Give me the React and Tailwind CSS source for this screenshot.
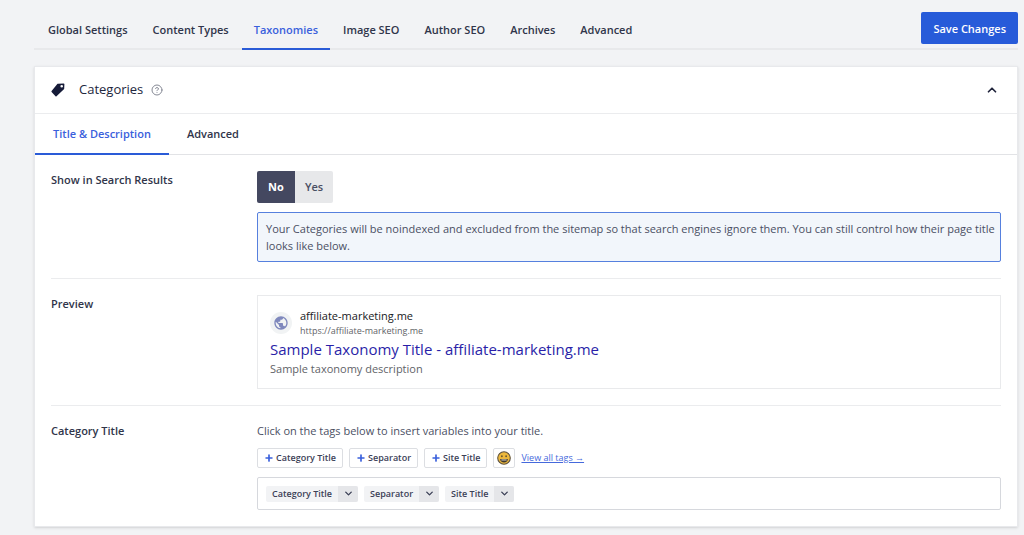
import React, { useState } from "react";
import { ChevronDown, ChevronUp, CircleHelp, Plus } from "lucide-react";

const NAV_TABS = [
  "Global Settings",
  "Content Types",
  "Taxonomies",
  "Image SEO",
  "Author SEO",
  "Archives",
  "Advanced",
];

const PANEL_TABS = ["Title & Description", "Advanced"];

const VARIABLES = ["Category Title", "Separator", "Site Title"];

const TagIcon = () => (
  <svg viewBox="0 0 14 14" className="size-3.5 text-[#161b38]" fill="currentColor" aria-hidden="true">
    <path
      fillRule="evenodd"
      d="M7 .8 12.6.4c.5 0 .8.3.8.7l-.2 4.500c0 .3-.1.5-.3.7L5.500 13.200c-.3.3-.7.3-1 0L.6 8.900c-.3-.3-.3-.7 0-1L6.300 1.100C6.500.9 6.700.8 7 .8ZM10.700 1.900a1.300 1.300 0 1 0 0 2.600 1.300 1.300 0 0 0 0-2.600Z"
    />
  </svg>
);

const GlobeIcon = () => (
  <svg viewBox="0 0 24 24" className="size-4 text-[#7f88bd]" fill="currentColor" aria-hidden="true">
    <path d="M12 2C6.48 2 2 6.48 2 12s4.48 10 10 10 10-4.48 10-10S17.52 2 12 2zm-1 17.93c-3.95-.49-7-3.85-7-7.93 0-.62.08-1.21.21-1.79L9 15v1c0 1.1.9 2 2 2v1.93zm6.9-2.54c-.26-.81-1-1.39-1.9-1.39h-1v-3c0-.55-.45-1-1-1H8v-2h2c.55 0 1-.45 1-1V7h2c1.1 0 2-.9 2-2v-.41c2.93 1.19 5 4.06 5 7.41 0 2.08-.8 3.97-2.1 5.39z" />
  </svg>
);

const SmileyIcon = () => (
  <svg viewBox="0 0 16 16" className="size-3.5 shrink-0" aria-hidden="true">
    <circle cx="8" cy="8" r="7.2" fill="#edb83c" stroke="#5b5040" strokeWidth="1.2" />
    <ellipse cx="5.6" cy="6" rx="0.8" ry="1.2" fill="#40392f" />
    <ellipse cx="10.4" cy="6" rx="0.8" ry="1.2" fill="#40392f" />
    <path d="M3.6 9h8.8c0 2.5-1.9 4-4.4 4s-4.400-1.500-4.400-4Z" fill="#40392f" />
    <path d="M5 9.700h6v1.100H5Z" fill="#e9e2d4" />
  </svg>
);

const SettingRow = ({ label, htmlFor, labelId, children }) => {
  const labelClass = "w-[190px] shrink-0 text-[11px] leading-[18px] font-semibold text-[#30354a]";

  return (
    <div className="flex gap-4 border-b border-[#ebecee] py-4 last:border-b-0">
      {htmlFor ? (
        <label htmlFor={htmlFor} className={labelClass}>{label}</label>
      ) : (
        <div id={labelId} className={labelClass}>{label}</div>
      )}
      <div className="min-w-0 flex-1">{children}</div>
    </div>
  );
};

const VariableChip = ({ name }) => (
  <span className="flex h-4 overflow-hidden rounded-xs bg-[#f2f3f5] text-[9px] font-semibold text-[#3c4157]">
    <span className="flex items-center px-1.5">{name}</span>
    <button type="button" aria-label={`${name} options`} className="flex w-5 items-center justify-center bg-[#e5e6e9]">
      <ChevronDown size={11} strokeWidth={3} />
    </button>
  </span>
);

export default function App() {
  const [activeTab, setActiveTab] = useState("Taxonomies");
  const [panelTab, setPanelTab] = useState("Title & Description");
  const [showInSearch, setShowInSearch] = useState("No");
  const [open, setOpen] = useState(true);

  return (
    <div className="min-h-screen bg-[#f2f3f5] pr-1.5 pb-2 pl-[34px] font-['Open_Sans',sans-serif] text-[#4a4f63]">
      {/* Top navigation */}
      <header className="flex items-end justify-between border-b-2 border-[#e8e9eb] pt-2.5">
        <nav className="-mb-0.5 flex gap-px pl-0.5">
          {NAV_TABS.map((tab) => (
            <button
              key={tab}
              type="button"
              onClick={() => setActiveTab(tab)}
              className={`h-10 border-b-2 px-3 pt-0.5 text-[11px] font-semibold ${
                activeTab === tab ? "border-[#2a5bd7] text-[#3a60dc]" : "border-transparent text-[#30354a]"
              }`}
            >
              {tab}
            </button>
          ))}
        </nav>
        <button type="button" className="mb-1 h-8 rounded-xs bg-[#275bd9] px-3 pt-0.5 text-[11px] font-semibold text-white">
          Save Changes
        </button>
      </header>

      <main className="mt-4 border border-[#e8e9ec] bg-white shadow-sm">
        <div className="flex h-[47px] items-center justify-between border-b border-[#ebecee] px-4">
          <div className="flex items-center">
            <TagIcon />
            <h2 className="ml-3.5 text-[13px] font-medium text-[#22263d]">Categories</h2>
            <CircleHelp size={12} className="ml-2 text-[#858995]" />
          </div>
          <button type="button" aria-label="Toggle panel" aria-expanded={open} onClick={() => setOpen(!open)} className="px-0.5 text-[#22263d]">
            {open ? <ChevronUp size={14} strokeWidth={3} /> : <ChevronDown size={14} strokeWidth={3} />}
          </button>
        </div>

        {open && (
          <>
            <div className="flex border-b border-[#e2e3e6]">
              {PANEL_TABS.map((tab) => (
                <button
                  key={tab}
                  type="button"
                  onClick={() => setPanelTab(tab)}
                  className={`-mb-px h-[41px] border-b-2 px-4.5 pt-0.5 text-[11px] font-semibold ${
                    panelTab === tab ? "border-[#2a5bd7] text-[#3a60dc]" : "border-transparent text-[#30354a]"
                  }`}
                >
                  {tab}
                </button>
              ))}
            </div>

            <div className="px-4">
              <SettingRow label="Show in Search Results" labelId="search-results-label">
                <div role="radiogroup" aria-labelledby="search-results-label" className="flex">
                  {["No", "Yes"].map((option) => (
                    <label
                      key={option}
                      className={`relative flex h-8 w-[38px] cursor-pointer items-center justify-center text-[11px] first:rounded-l-xs last:rounded-r-xs ${
                        showInSearch === option ? "bg-[#444860] font-bold text-white" : "bg-[#e7e8ea] font-semibold text-[#4a4f63]"
                      }`}
                    >
                      <input
                        type="radio"
                        name="show-in-search"
                        value={option}
                        checked={showInSearch === option}
                        onChange={() => setShowInSearch(option)}
                        className="sr-only"
                      />
                      {option}
                    </label>
                  ))}
                </div>
                <p className="mt-[9px] rounded-xs border border-[#5680de] bg-[#f2f6fb] py-[7px] pr-0.5 pl-2 text-[11px] leading-[17px]">
                  Your Categories will be noindexed and excluded from the sitemap so that search engines ignore them. You can
                  still control how their page title looks like below.
                </p>
              </SettingRow>

              <SettingRow label="Preview">
                <div className="border border-[#e9eaec] px-3 pt-3 pb-2.5">
                  <div className="flex items-center gap-2">
                    <span className="flex size-[22px] items-center justify-center rounded-full bg-[#f1f3f4]">
                      <GlobeIcon />
                    </span>
                    <div>
                      <div className="text-[11px] leading-4 text-[#202124]">affiliate-marketing.me</div>
                      <div className="text-[9px] leading-3.5 text-[#5f6368]">https://affiliate-marketing.me</div>
                    </div>
                  </div>
                  <a href="#preview" className="block text-[15px] leading-[22px] text-[#2a1fa8]">
                    Sample Taxonomy Title - affiliate-marketing.me
                  </a>
                  <p className="text-[11px] leading-[18px] text-[#5f6368]">Sample taxonomy description</p>
                </div>
              </SettingRow>

              <SettingRow label="Category Title" htmlFor="category-title">
                <p className="text-[11px] leading-[18px]">Click on the tags below to insert variables into your title.</p>
                <div className="mt-2 flex items-center gap-1.5">
                  {VARIABLES.map((name) => (
                    <button
                      key={name}
                      type="button"
                      className="flex h-5 items-center gap-0.5 rounded-xs border border-[#dcdee2] px-1.5 text-[9px] font-semibold text-[#3c4157]"
                    >
                      <Plus size={10} strokeWidth={4} className="text-[#3a60dc]" />
                      {name}
                    </button>
                  ))}
                  <button type="button" aria-label="Insert emoji" className="flex h-5 w-[22px] items-center justify-center rounded-xs border border-[#dcdee2]">
                    <SmileyIcon />
                  </button>
                  <a href="#tags" className="text-[9px] text-[#4569dc] underline">
                    View all tags →
                  </a>
                </div>
                <div className="mt-[9px] flex h-[33px] items-center gap-1.5 rounded-xs border border-[#d6d8dd] px-2">
                  {VARIABLES.map((name) => (
                    <VariableChip key={name} name={name} />
                  ))}
                  <input id="category-title" type="text" className="min-w-0 flex-1 text-[11px] outline-none" />
                </div>
              </SettingRow>
            </div>
          </>
        )}
      </main>
    </div>
  );
}
